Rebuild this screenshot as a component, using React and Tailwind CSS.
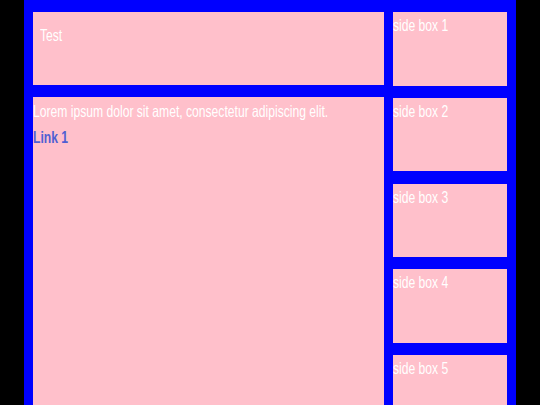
import React from 'react';

// texte compressé horizontalement, comme sur la capture
const Squeezed = ({ children, className = '' }) => (
  <span className={`inline-block whitespace-nowrap scale-x-[0.735] origin-left ${className}`}>
    {children}
  </span>
);

const SideBox = ({ label }) => (
  <div className="h-[73.6px] shrink-0 bg-[#ffc0cb] pt-[1px] text-white">
    <Squeezed>{label}</Squeezed>
  </div>
);

export default function App() {
  const sides = ['side box 1', 'side box 2', 'side box 3', 'side box 4', 'side box 5'];

  return (
    <div
      className="h-screen overflow-hidden bg-black text-[16.5px]"
      style={{ fontFamily: '"Liberation Sans", Arial, sans-serif' }}
    >
      <div className="mx-auto w-[492px] h-[460px] bg-[#0000ff] pt-[12px] px-[9px] flex gap-[9px]">

        <div className="w-[351px] flex flex-col gap-[12px]">
          <div className="h-[73px] shrink-0 bg-[#ffc0cb] pl-[7px] pt-[11px] text-white">
            <Squeezed>Test</Squeezed>
          </div>
          <div className="flex-1 bg-[#ffc0cb] pt-[2px]">
            <div className="text-white">
              <Squeezed>Lorem ipsum dolor sit amet, consectetur adipiscing elit.</Squeezed>
            </div>
            <a href="#" className="block mt-[1px] font-bold text-[#4f5fd3]">
              <Squeezed>Link 1</Squeezed>
            </a>
          </div>
        </div>

        <div className="w-[114px] flex flex-col gap-[12.2px]">
          {sides.map(s => <SideBox key={s} label={s} />)}
        </div>

      </div>
    </div>
  );
}
